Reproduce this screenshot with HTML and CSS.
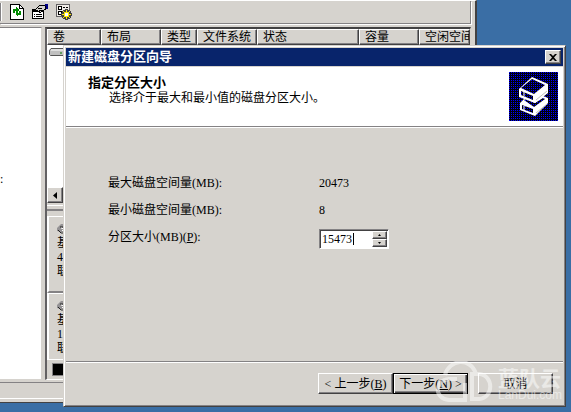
FILE: index.html
```html
<!DOCTYPE html>
<html lang="zh-CN">
<head>
    <meta charset="UTF-8">
    <meta name="viewport" content="width=device-width, initial-scale=1.0">
    <title>新建磁盘分区向导</title>
    <link rel="stylesheet" href="styles.css">
</head>
<body>
    <!-- Disk management window -->
    <div class="window">
        <div class="toolbar">
            <span class="divider"></span>
            <button type="button" class="tool" aria-label="刷新">
                <svg width="14" height="16" viewBox="0 0 14 16" shape-rendering="crispEdges">
                    <path d="M.5.5h9l4 4v11H.5z" fill="#fff" stroke="#000"/>
                    <path d="M9.500.5v4h4" fill="none" stroke="#000"/>
                    <path d="M3 9V5h3V3l3 3-3 3V7H5v2zM11 7v4H8v2l-3-3 3-3v2h1V7z" fill="#008a00"/>
                </svg>
            </button>
            <button type="button" class="tool" aria-label="属性">
                <svg width="16" height="16" viewBox="0 0 16 16" shape-rendering="crispEdges">
                    <path d="M.5 5.500h11v9H.5z" fill="#fff" stroke="#000"/>
                    <path d="M1 6h10v2H1z"/>
                    <path d="M2 10.500h1M4 10.500h6M2 12.500h1M4 12.500h6" stroke="#000"/>
                    <path d="M3.500 5.500l4-4h5l1 1v3l-3 1-2 2-2-1z" fill="#d6d3ce" stroke="#000"/>
                    <path d="M6 4.500h4M7 6.500h3" stroke="#000"/>
                    <path d="M13 0h3v5h-2V2h-1z" fill="#000084"/>
                </svg>
            </button>
            <button type="button" class="tool" aria-label="设置">
                <svg width="16" height="16" viewBox="0 0 16 16" shape-rendering="crispEdges">
                    <path d="M.5.5h13v12H.5z" fill="#efebe7" stroke="#636163"/>
                    <path d="M2.500 2.500h3v3h-3zM2.500 7.500h3v3h-3z" fill="#fff" stroke="#000"/>
                    <path d="M7 3.500h2M10 3.500h2" stroke="#000"/>
                    <path d="M9.500 5.500h2v2l2-1 1 1-1 2h2v2h-2l1 2-1 1-2-1v2h-2v-2l-2 1-1-1 1-2h-2v-2h2l-1-2 1-1 2 1z" fill="#ffe800" stroke="#424142"/>
                    <path d="M9 9h3v3H9z" fill="#fff"/>
                </svg>
            </button>
        </div>

        <div class="panes">
            <div class="tree">:</div>
            <div class="detail">
                <div class="volumes">
                    <table>
                        <thead>
                            <tr>
                                <th class="col-volume">卷</th>
                                <th class="col-layout">布局</th>
                                <th class="col-type">类型</th>
                                <th class="col-fs">文件系统</th>
                                <th class="col-status">状态</th>
                                <th class="col-size">容量</th>
                                <th>空闲空间</th>
                            </tr>
                        </thead>
                    </table>
                    <svg class="drive" width="16" height="8" viewBox="0 0 16 8">
                        <path d="M2 .5h12l1.500 2v4l-1 1h-13l-1-1v-4z" fill="#c0c0c0" stroke="#555"/>
                        <path d="M2 2h12" stroke="#fff"/>
                        <path d="M11 5h2" stroke="#008000"/>
                    </svg>
                </div>
                <div class="scrollbar">
                    <button type="button" class="scroll-left" aria-label="向左滚动">
                        <svg width="4" height="7" viewBox="0 0 4 7"><path d="M4 0v7L0 3.500z"/></svg>
                    </button>
                </div>
                <div class="splitter"></div>
                <div class="disk">
                    <svg class="disk-icon" width="12" height="10" viewBox="0 0 12 10">
                        <path d="M0 4l4-4h8v8H4L0 7z" fill="#949294"/>
                        <path d="M3 3h8M1 6l3 3h7" stroke="#222" fill="none"/>
                        <path d="M4 4l3 1-2 2" stroke="#fff" fill="none"/>
                    </svg>
                    <p>基本</p>
                    <p>40.00 GB</p>
                    <p>联机</p>
                </div>
                <div class="disk">
                    <svg class="disk-icon" width="12" height="10" viewBox="0 0 12 10">
                        <path d="M0 4l4-4h8v8H4L0 7z" fill="#949294"/>
                        <path d="M3 3h8M1 6l3 3h7" stroke="#222" fill="none"/>
                        <path d="M4 4l3 1-2 2" stroke="#fff" fill="none"/>
                    </svg>
                    <p>基本</p>
                    <p>19.99 GB</p>
                    <p>联机</p>
                </div>
                <div class="legend"><span class="swatch"></span></div>
            </div>
        </div>
        <div class="statusbar"></div>
    </div>

    <!-- Wizard dialog -->
    <form class="dialog">
        <div class="titlebar">
            <span>新建磁盘分区向导</span>
            <button type="button" class="close" aria-label="关闭">
                <svg width="8" height="7" viewBox="0 0 8 7"><path d="M0 0h2l2 2 2-2h2L5 3.500 8 7H6L4 5 2 7H0l3-3.500z"/></svg>
            </button>
        </div>
        <div class="header">
            <div>
                <h1>指定分区大小</h1>
                <p>选择介于最大和最小值的磁盘分区大小。</p>
            </div>
            <svg class="logo" width="49" height="49" viewBox="0 0 49 49">
                <defs>
                    <pattern id="dots" width="2" height="2" patternUnits="userSpaceOnUse">
                        <rect width="2" height="2" fill="#000010"/>
                        <rect width="1" height="1" fill="#0000ff"/>
                    </pattern>
                </defs>
                <rect width="49" height="49" fill="url(#dots)"/>
                <path d="M11 31l5-5 10 3 8-5 5 2v5L26 44l-15-6z" fill="#fff"/>
                <path d="M13 33l11 4v4l-11-4z" fill="url(#dots)"/>
                <path d="M15 28l2-1 9 4 8-5 2 1-11 8z" fill="url(#dots)"/>
                <path d="M10 17L23 5l16 7v9L26 31l-16-6z" fill="#fff"/>
                <path d="M12 16L23 7l13 6-11 9z" fill="url(#dots)"/>
                <path d="M12 19l12 5v4l-12-5z" fill="url(#dots)"/>
                <path d="M15 20v4M15 34v4" stroke="#fff"/>
                <path d="M27 28l11-9M27 41l11-9" stroke="#c0c0c0"/>
            </svg>
        </div>
        <div class="content">
            <span>最大磁盘空间量(MB):</span>
            <span>20473</span>
            <span>最小磁盘空间量(MB):</span>
            <span>8</span>
            <label for="size">分区大小(MB)(<u>P</u>):</label>
            <div class="spinner">
                <input type="text" id="size" name="size" value="15473">
                <span class="caret"></span>
                <div class="arrows">
                    <button type="button" aria-label="增加"><svg width="3" height="2" viewBox="0 0 3 2"><path d="M0 2h3L1.500 0z"/></svg></button>
                    <button type="button" aria-label="减少"><svg width="3" height="2" viewBox="0 0 3 2"><path d="M0 0h3L1.500 2z"/></svg></button>
                </div>
            </div>
        </div>
        <div class="actions">
            <button type="button" class="btn">&lt; 上一步(<u>B</u>)</button>
            <button type="submit" class="btn default">下一步(<u>N</u>) &gt;</button>
            <button type="button" class="btn cancel">取消</button>
        </div>
        <div class="watermark">
            <svg width="58" height="42" viewBox="0 0 58 42" fill="none" stroke="#fff" stroke-width="4">
                <path d="M10 14C14-2 36-4 41 13M22 18H14C-1 19-1 38 14 39H30V22M37 13h7c15 1 15 24 0 25h-7z"/>
            </svg>
            <div>
                <strong>蓝队云</strong>
                <span>LanDui.com</span>
            </div>
        </div>
    </form>
</body>
</html>
```

FILE: styles.css
```css
* {
    box-sizing: border-box;
}
body {
    margin: 0;
    min-height: 100vh;
    background-color: #3a6ea5;
    color: #000;
    font-family: "Liberation Serif", "Noto Sans CJK SC", sans-serif;
    font-size: 12px;
    line-height: 14px;
    overflow: hidden;
}
h1, p {
    margin: 0;
}
button {
    padding: 0;
    background-color: #d6d3ce;
    border: 1px solid;
    border-color: #fff #424142 #424142 #fff;
    box-shadow: inset -1px -1px #848284;
    color: #000;
    font: inherit;
    display: flex;
    align-items: center;
    justify-content: center;
}

/* Disk management window */
.window {
    width: calc(100% - 94px);
    height: calc(100vh - 9px);
    display: flex;
    flex-direction: column;
    background-color: #d6d3ce;
    border-right: 2px solid #424142;
    border-bottom: 1px solid #424142;
    border-top: 1px solid #fff;
    overflow: hidden;
}
.toolbar {
    display: flex;
    gap: 8px;
    align-items: center;
    height: 23px;
    margin-right: 4px;
    border-right: 1px solid #848284;
    border-bottom: 1px solid #848284;
    box-shadow: 1px 1px #fff;
    flex-shrink: 0;
}
.divider {
    width: 2px;
    height: 18px;
    background-color: #848284;
    border-right: 1px solid #fff;
}
.tool {
    background: none;
    border: none;
    box-shadow: none;
}
.panes {
    display: flex;
    flex: 1;
    gap: 3px;
    margin: 3px 4px 2px 0;
}
.tree {
    width: 42px;
    padding-top: 144px;
    background-color: #fff;
    border-top: 1px solid #848284;
    border-right: 1px solid #d6d3ce;
    border-bottom: 1px solid #d6d3ce;
    box-shadow: inset -1px -1px #fff;
}
.detail {
    flex: 1;
    min-width: 0;
    display: flex;
    flex-direction: column;
    border: 2px solid #424142;
    border-left-color: #636163;
    border-right: 1px solid #d6d3ce;
    border-bottom: 1px solid #fff;
    overflow: hidden;
}
.volumes {
    height: 158px;
    background-color: #fff;
    overflow: hidden;
}
table {
    width: 100%;
    table-layout: fixed;
    border-collapse: separate;
    border-spacing: 0;
}
th {
    height: 16px;
    padding: 0 0 0 5px;
    background-color: #d6d3ce;
    border: 1px solid;
    border-color: #fff #424142 #424142 #fff;
    box-shadow: inset -1px -1px #848284;
    font-weight: normal;
    text-align: left;
    white-space: nowrap;
    overflow: hidden;
}
.col-volume {
    width: 54px;
}
.col-layout, .col-fs, .col-size {
    width: 60px;
}
.col-type {
    width: 36px;
}
.col-status {
    width: 102px;
}
.drive {
    display: block;
    margin: 3px 2px;
}
.scrollbar {
    height: 16px;
}
.scroll-left {
    width: 16px;
    height: 16px;
}
.splitter {
    height: 6px;
    margin: 2px 0 5px;
    border-top: 1px solid #fff;
    border-bottom: 2px solid #848284;
}
.disk {
    height: 77px;
    padding: 7px 8px 0;
    border-top: 1px solid #fff;
    border-left: 2px solid #fff;
    border-bottom: 2px solid #848284;
}
.disk + .disk {
    height: 66px;
    border-bottom: none;
}
.disk-icon {
    display: block;
    margin-bottom: 2px;
}
.legend {
    flex: 1;
    padding: 3px 5px;
    border-top: 1px solid #fff;
}
.swatch {
    display: block;
    width: 16px;
    height: 13px;
    background-color: #000;
    border: 1px solid #848284;
}
.statusbar {
    height: 19px;
    margin-bottom: 3px;
    border-top: 1px solid #848284;
    border-bottom: 1px solid #fff;
}

/* Wizard dialog, floats over the window */
.dialog {
    position: absolute;
    top: 45px;
    left: 63px;
    right: 5px;
    padding: 2px;
    background-color: #d6d3ce;
    border: 1px solid;
    border-color: #d6d3ce #424142 #424142 #d6d3ce;
    box-shadow: inset 1px 1px #fff, inset -1px -1px #848284;
}
.titlebar {
    display: flex;
    align-items: center;
    justify-content: space-between;
    height: 18px;
    padding: 0 2px;
    background-color: #08246b;
    color: #fff;
    font-size: 13px;
    font-weight: bold;
}
.close {
    width: 16px;
    height: 14px;
}
.header {
    display: flex;
    justify-content: space-between;
    height: 61px;
    padding: 5px 5px 0 22px;
    background-color: #fff;
    border-top: 1px solid #d6d3ce;
    border-bottom: 1px solid #848284;
    box-shadow: 0 1px #fff;
}
.header h1 {
    padding-top: 4px;
    font-size: 13px;
    line-height: 14px;
}
.header p {
    padding-left: 21px;
    line-height: 16px;
}
.content {
    display: grid;
    grid-template-columns: 211px 1fr;
    grid-auto-rows: 20px;
    row-gap: 7px;
    align-items: center;
    height: 234px;
    padding: 46px 0 0 42px;
}
.spinner {
    display: flex;
    align-items: center;
    width: 70px;
    height: 20px;
    margin-top: 4px;
    padding: 1px;
    background-color: #fff;
    border: 1px solid;
    border-color: #848284 #fff #fff #848284;
    box-shadow: inset 1px 1px #424142;
}
.spinner input {
    width: 32px;
    height: 14px;
    padding: 0 0 0 1px;
    background: none;
    border: none;
    outline: none;
    color: #000;
    font: inherit;
}
.caret {
    width: 1px;
    height: 12px;
    background-color: #000;
}
.arrows {
    width: 15px;
    margin-left: auto;
}
.arrows button {
    width: 15px;
    height: 8px;
}
.actions {
    display: flex;
    justify-content: flex-end;
    height: 43px;
    padding: 11px 10px 0 0;
    border-top: 1px solid #848284;
    box-shadow: inset 0 1px #fff;
}
.btn {
    width: 75px;
    height: 21px;
    white-space: pre;
}
.default {
    border-color: #000;
    box-shadow: inset 1px 1px #fff, inset -1px -1px #424142, inset -2px -2px #848284;
}
.cancel {
    margin-left: 10px;
}
.watermark {
    position: absolute;
    right: 3px;
    bottom: 3px;
    display: flex;
    gap: 5px;
    color: #fff;
    font-family: "Liberation Sans", "Noto Sans CJK SC", sans-serif;
    opacity: 0.5;
    pointer-events: none;
}
.watermark div {
    padding-top: 6px;
}
.watermark strong, .watermark span {
    display: block;
}
.watermark strong {
    font-size: 21px;
    line-height: 23px;
}
.watermark span {
    font-size: 12px;
    line-height: 10px;
}
```
